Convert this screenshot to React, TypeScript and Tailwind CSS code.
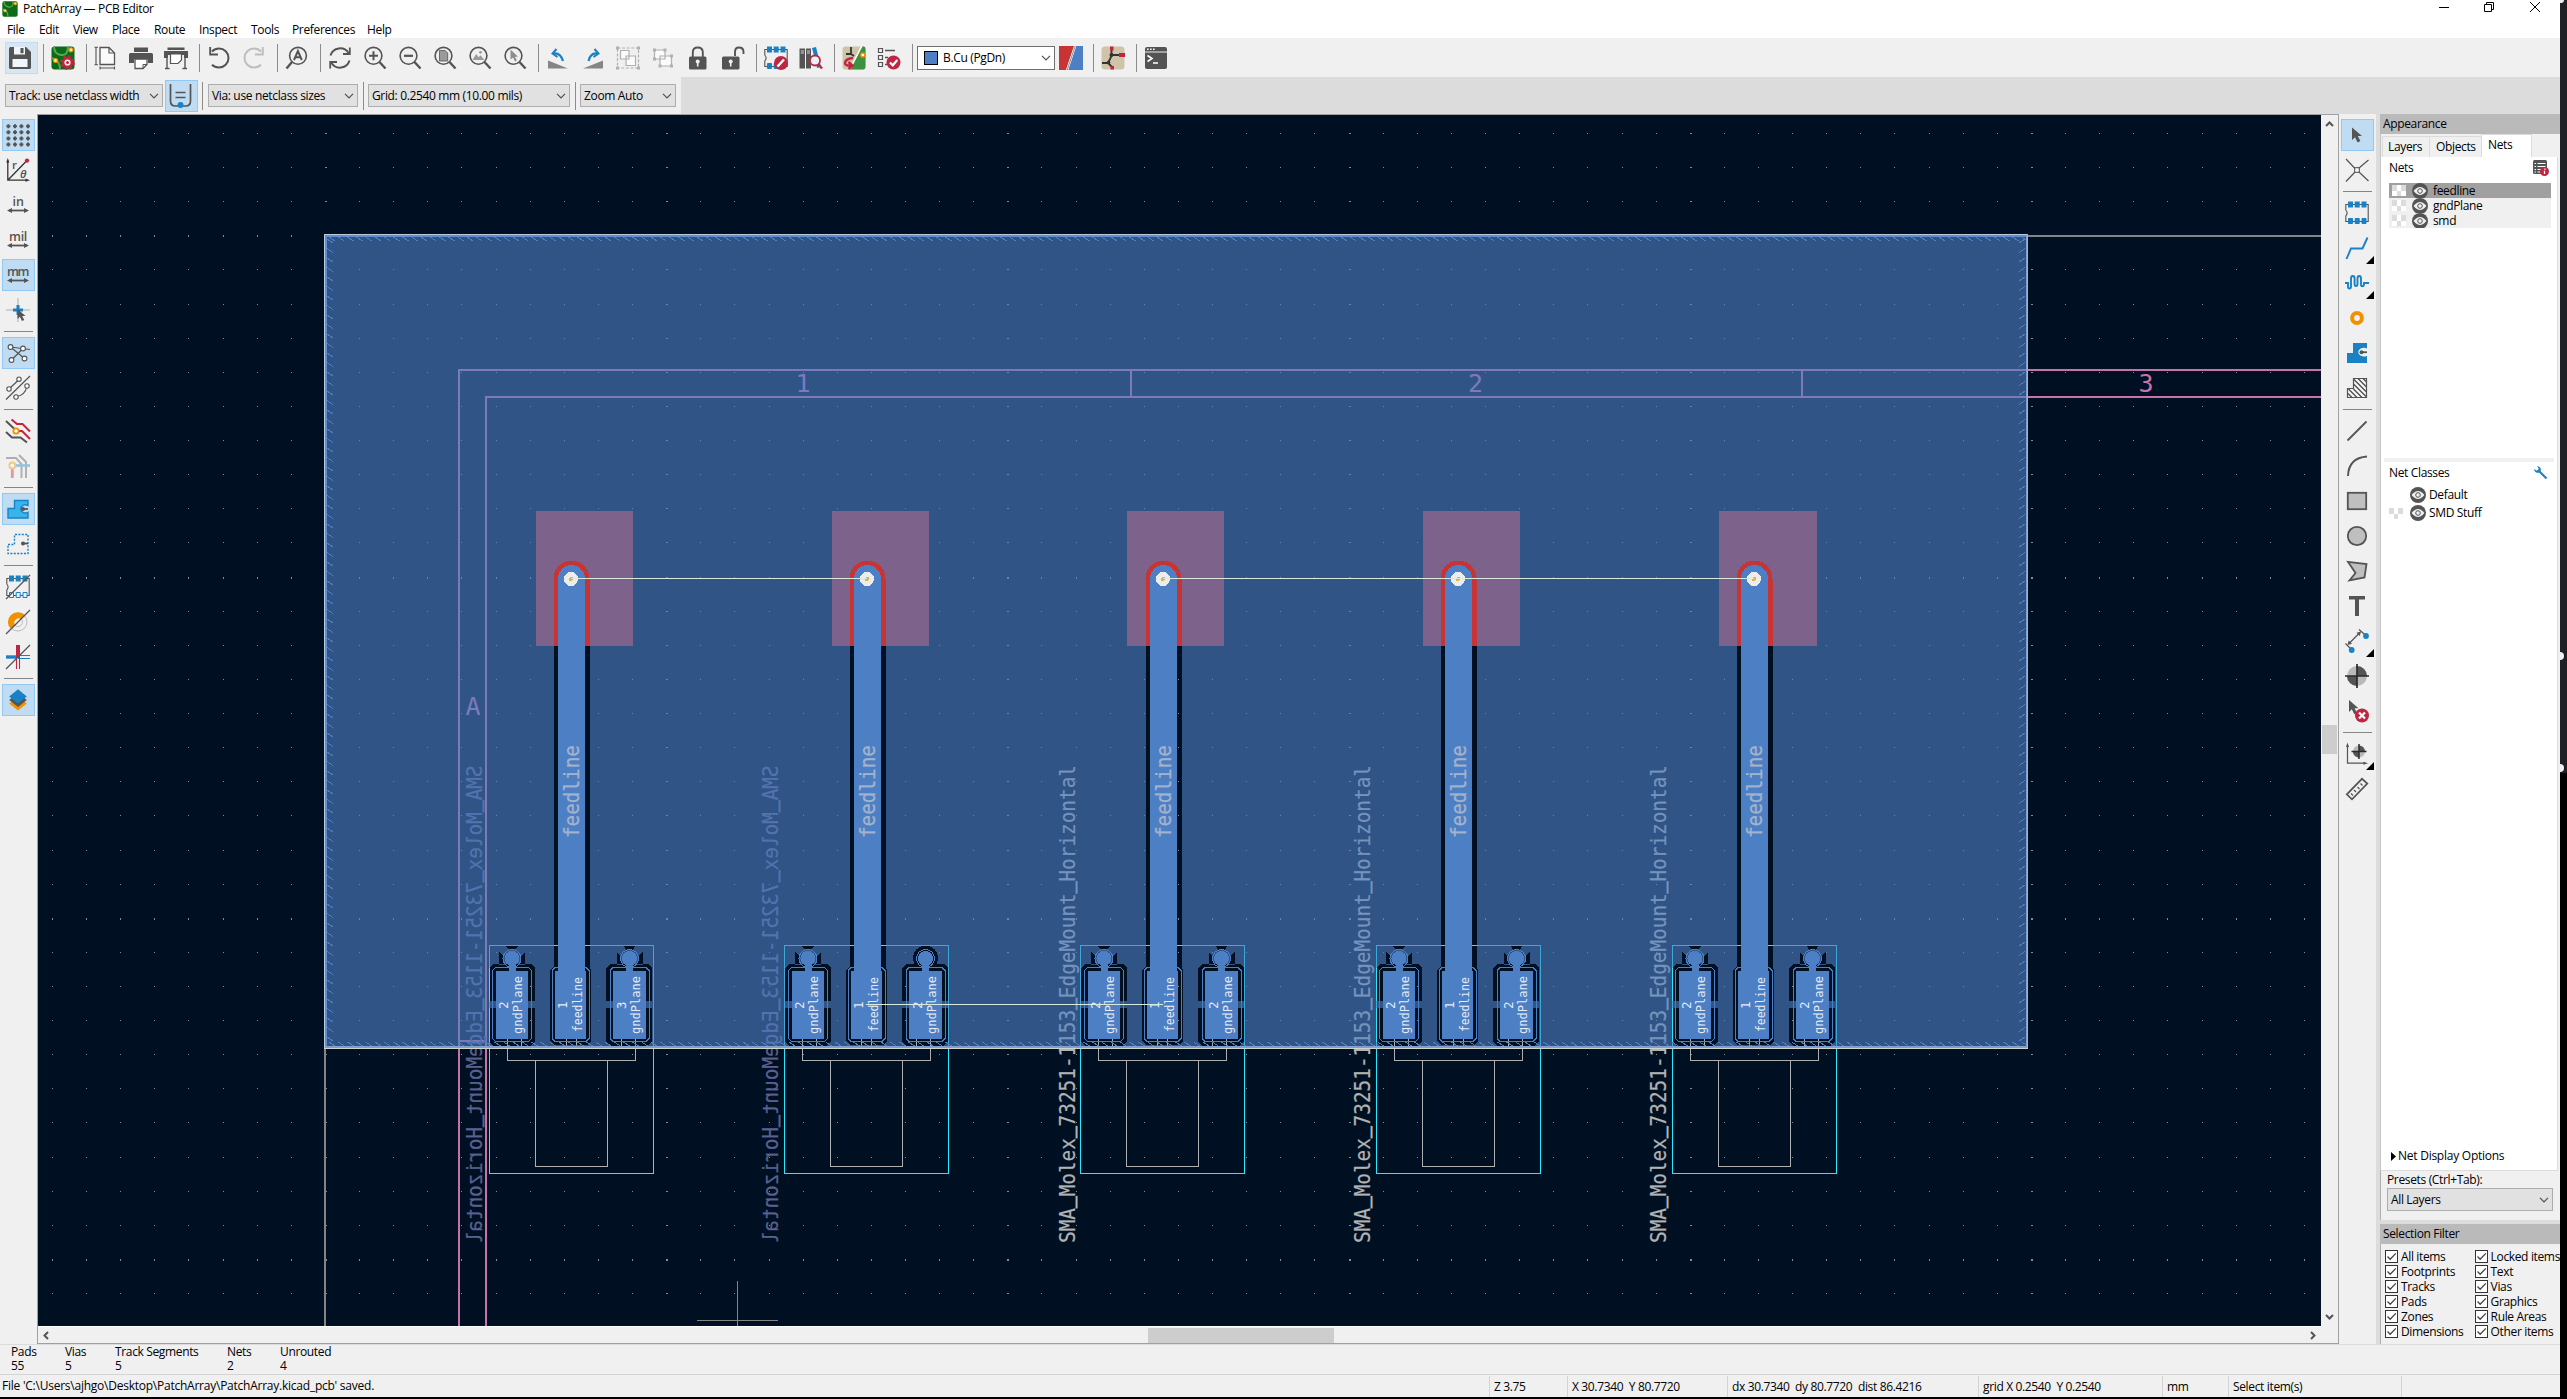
import React from "react";

const G = "#545454";
const B = "#1a81c4";
const R = "#bf2641";
const O = "#f29100";

function Ico({ children, s = 24 }: { children: React.ReactNode; s?: number }) {
  return (
    <svg width={s} height={s} viewBox="0 0 24 24" fill="none" stroke={G} strokeWidth="1.6" className="shrink-0 overflow-visible">
      {children}
    </svg>
  );
}

function Btn({ on, more, children }: { on?: boolean; more?: boolean; children: React.ReactNode }) {
  return (
    <div
      className={
        on
          ? "relative flex h-8 w-[33px] shrink-0 items-center border border-[#90c8f6] bg-[#c0dcf3] pl-[3px]"
          : "relative flex h-8 w-[33px] shrink-0 items-center pl-[4px]"
      }
    >
      {children}
      {more && (
        <svg width="8" height="8" className="absolute right-0 bottom-0">
          <path d="M8 0V8H0Z" fill="#000" />
        </svg>
      )}
    </div>
  );
}

const VSep = () => (
  <div className="flex h-8 w-[6px] shrink-0 justify-center">
    <div className="h-7 w-px self-center bg-[#8c8c8c]" />
  </div>
);
const HSep = () => (
  <div className="flex h-[5px] w-[33px] shrink-0 items-center justify-center">
    <div className="h-px w-[29px] bg-[#858585]" />
  </div>
);

const Chevron = () => (
  <svg width="10" height="6" viewBox="0 0 10 6" fill="none" stroke="#505050" strokeWidth="1.2" className="shrink-0">
    <path d="M1 .8L5 4.8L9 .8" />
  </svg>
);

function Combo({ label, className }: { label: string; className: string }) {
  return (
    <div className={"flex h-[23px] shrink-0 items-center justify-between border border-[#adadad] bg-[#e1e1e1] pr-[3px] pl-[3px] " + className}>
      <span>{label}</span>
      <Chevron />
    </div>
  );
}

/* ---------- icons ---------- */

const Lens = ({ children }: { children?: React.ReactNode }) => (
  <Ico>
    <circle cx="10.5" cy="9.8" r="8.4" />
    <path d="M16.5 16L22.5 22.5" strokeWidth="2.4" />
    {children}
  </Ico>
);
const Arrow2 = ({ y = 19 }: { y?: number }) => (
  <g fill={G} stroke="none">
    <path d={`M3 ${y - 0.9}H21V${y + 0.9}H3Z`} />
    <path d={`M1 ${y}L6 ${y - 2.6}V${y + 2.6}ZM23 ${y}L18 ${y - 2.6}V${y + 2.6}Z`} />
  </g>
);
const UnitIcon = ({ t, w }: { t: string; w: number }) => (
  <Ico>
    <text x="12" y="12.5" textAnchor="middle" textLength={w} fontFamily="Open Sans" fontSize="12.5" fontWeight="600" fill={G} stroke="none">
      {t}
    </text>
    <Arrow2 y={17.5} />
  </Ico>
);
const Footprint = ({ children, hollow }: { children?: React.ReactNode; hollow?: boolean }) => (
  <Ico>
    <path d="M.8 3.5H23.2V20.5H.8V15Q3.4 12 .8 9Z" strokeWidth="1.1" />
    <g fill={B} stroke="none">
      <path d="M3 .5h5v6h-5zM9.7 .5h5v6h-5zM16.5 .5h5v6h-5z" />
    </g>
    <g fill={hollow ? "#f0f0f0" : B} stroke={B} strokeWidth="1">
      <path d="M3.5 17.5h4v5h-4zM10.2 17.5h4v5h-4zM17 17.5h4v5h-4z" />
    </g>
    {children}
  </Ico>
);
const Lock = ({ open }: { open?: boolean }) => (
  <Ico>
    {open ? (
      <path d="M14 10V6Q14 1.5 18 1.5Q22.5 1.5 22.5 6V8" strokeWidth="1.9" />
    ) : (
      <path d="M6.8 11V6.5Q6.8 1.5 11.8 1.5Q16.8 1.5 16.8 6.5V11" strokeWidth="1.9" />
    )}
    <rect x={open ? 1 : 3} y="10.5" width="17.5" height="13" rx="1.5" fill={G} stroke="none" />
    <circle cx={open ? 9.7 : 11.7} cy="15.5" r="2" fill="#f0f0f0" stroke="none" />
    <path d={open ? "M9.7 16v4.5" : "M11.7 16v4.5"} stroke="#f0f0f0" strokeWidth="1.6" />
  </Ico>
);
const Board = () => (
  <g stroke="none">
    <rect x=".5" y=".5" width="23" height="23" rx="3" fill="#0b6b16" />
    <path d="M3 .5Q3 8 10 9Q17 10 17 .5M.5 12Q9 14 9 23.5" fill="none" stroke="#5aa552" strokeWidth="2" />
    <circle cx="4.5" cy="14.5" r="2" fill="#ffe9b0" stroke={O} strokeWidth="1.2" />
    <circle cx="20" cy="3.8" r="2" fill="#ffe9b0" stroke={O} strokeWidth="1.2" />
  </g>
);
const Cursor = ({ x = 0, y = 0, s = 1 }: { x?: number; y?: number; s?: number }) => (
  <path d="M0 0V12.5L3 9.8L5.6 15L8.4 13.6L5.8 8.6H10Z" transform={`translate(${x} ${y}) scale(${s})`} fill={G} stroke="none" />
);

const Schem = () => (
  <g>
    <rect x=".5" y=".5" width="23" height="23" rx="3.5" fill="#cfc3a8" stroke="none" />
    <path d="M10.5 3V10L7 17L1 17M10.5 9H20M7 17L11 21" stroke="#333" strokeWidth="1.8" />
    <circle cx="10.5" cy="9" r="2" fill="#333" stroke="none" />
    <circle cx="7.5" cy="16.5" r="1.8" fill="#333" stroke="none" />
  </g>
);

function TopToolbar() {
  return (
    <div className="flex h-[39px] w-[2560px] items-center gap-[2px] bg-[#f0f0f0] pl-[5px] [&>div>svg]:-ml-px">
      <div className="flex h-8 w-[33px] shrink-0 items-center border border-[#bfdcf3] bg-[#d8e6f1] pl-[3px]">
        <Ico>
          <path d="M1 2.5Q1 1 2.5 1H18L23 6V21.5Q23 23 21.5 23H2.5Q1 23 1 21.5Z" fill={G} stroke="none" />
          <path d="M6 1H17V8.5H6ZM4.5 13H19.5V21H4.5Z" fill="#f0f6fb" stroke="none" />
          <path d="M12.5 2H15.5V7.2H12.5Z" fill={G} stroke="none" />
        </Ico>
      </div>
      <VSep />
      <Btn>
        <Ico>
          <Board />
          <circle cx="16.5" cy="16.5" r="4.4" stroke={R} strokeWidth="2.6" fill="#f0f0f0" />
          <circle cx="16.5" cy="16.5" r="6.3" stroke={R} strokeWidth="2.2" strokeDasharray="2.4 2.55" />
          <circle cx="16.5" cy="16.5" r="1.5" fill={R} stroke="none" />
        </Ico>
      </Btn>
      <VSep />
      <Btn>
        <Ico>
          <path d="M6 1.5H15L20.5 7V18.5H6Z" strokeWidth="1.3" fill="#fafafa" />
          <path d="M15 1.5V7H20.5" strokeWidth="1.2" />
          <path d="M2 1V19M.5 1.2H4M.5 18.8H4M6 22H20.5M6 20.5V23.5M20.5 20.5V23.5" strokeWidth="1.1" />
        </Ico>
      </Btn>
      <Btn>
        <Ico>
          <path d="M5 1.5H19V6H5Z" fill={G} stroke="none" />
          <path d="M1.5 7H22.5Q24 7 24 8.5V17H19V13H5V17H0V8.5Q0 7 1.5 7Z" fill={G} stroke="none" />
          <path d="M6 13H18V18.5L14 22.5H6Z" fill="#fff" strokeWidth="1.3" />
          <path d="M18 18.5H14V22.5" strokeWidth="1" />
        </Ico>
      </Btn>
      <Btn>
        <Ico>
          <path d="M3.5 1.5H20.5V4H3.5ZM0 5H24V12H20V9H4V12H0Z" fill={G} stroke="none" />
          <path d="M6.5 8H17.5V14L14 17.5H6.5Z" fill="#fff" strokeWidth="1.2" />
          <path d="M3 11V22.5M21 11V22.5M1 22.5H5.5M18.5 22.5H23" strokeWidth="1.4" />
        </Ico>
      </Btn>
      <VSep />
      <Btn>
        <Ico>
          <path d="M5 5.5Q8 2.5 12 2.5A9.5 9.5 0 0 1 12 21.5Q7.5 21.5 5 18.8" strokeWidth="2" />
          <path d="M3.2 1V8.5H11" strokeWidth="1.9" />
        </Ico>
      </Btn>
      <Btn>
        <Ico>
          <g stroke="#bdbdbd">
            <path d="M19 5.5Q16 2.5 12 2.5A9.5 9.5 0 0 0 12 21.5Q16.5 21.5 19 18.8" strokeWidth="2" />
            <path d="M20.8 1V8.5H13" strokeWidth="1.9" />
          </g>
        </Ico>
      </Btn>
      <VSep />
      <Btn>
        <Ico>
          <circle cx="13" cy="9.8" r="8.4" />
          <path d="M7 16L1.5 22.5" strokeWidth="2.4" />
          <path d="M9 14L12.9 5L16.8 14M10.4 11.2H15.4" strokeWidth="2" />
        </Ico>
      </Btn>
      <VSep />
      <Btn>
        <Ico>
          <path d="M2.5 9.5A10 10 0 0 1 20.5 7M21.5 14.5A10 10 0 0 1 3.5 17" strokeWidth="2" />
          <path d="M21.8 1.5V8H15M2.2 22.5V16H9" strokeWidth="1.8" />
        </Ico>
      </Btn>
      <Btn>
        <Lens>
          <path d="M6 9.8H15M10.5 5.3V14.3" strokeWidth="2" />
        </Lens>
      </Btn>
      <Btn>
        <Lens>
          <path d="M6 9.8H15" strokeWidth="2.2" />
        </Lens>
      </Btn>
      <Btn>
        <Lens>
          <path d="M6.5 4.5H12.2L14.7 7V15H6.5Z" fill="#9a9a9a" strokeWidth=".8" />
        </Lens>
      </Btn>
      <Btn>
        <Lens>
          <path d="M4.5 14L8.2 8L10.6 11.2L12.6 9.2L16.4 14Z" fill="#9a9a9a" stroke="none" />
          <circle cx="12.5" cy="6.3" r="1.4" fill="#9a9a9a" stroke="none" />
        </Lens>
      </Btn>
      <Btn>
        <Lens>
          <path d="M7.5 3.5V13.5L10 11.5L12 15.5L13.8 14.5L12 10.8H15Z" fill="#8d8d8d" stroke="none" />
        </Lens>
      </Btn>
      <VSep />
      <Btn>
        <Ico>
          <path d="M2 14.5V22.5H22Z" fill="#858585" stroke="none" />
          <path d="M7 7.5Q14.5 6 17 15" stroke={B} strokeWidth="2.2" />
          <path d="M10.5 3L6.5 7.6L11.5 11" stroke={B} strokeWidth="2" />
        </Ico>
      </Btn>
      <Btn>
        <Ico>
          <path d="M22 14.5V22.5H2Z" fill="#858585" stroke="none" />
          <path d="M17 7.5Q9.5 6 7.5 15" stroke={B} strokeWidth="2.2" />
          <path d="M13.5 3L17.5 7.6L12.5 11" stroke={B} strokeWidth="2" />
        </Ico>
      </Btn>
      <Btn>
        <Ico>
          <rect x="1.5" y="2" width="21" height="20" stroke="#b0b0b0" strokeWidth="1.2" strokeDasharray="3 1.6" />
          <path d="M4.5 4.5H13V13H4.5ZM10 10H19.5V19.5H10Z" fill="#fbfbfb" stroke="#b0b0b0" strokeWidth="1.2" />
          <path d="M0 .5h3v3H0zM21 .5h3v3h-3zM0 20.5h3v3H0zM21 20.5h3v3h-3z" fill="#b0b0b0" stroke="none" />
        </Ico>
      </Btn>
      <Btn>
        <Ico>
          <path d="M3.5 4H14V13H3.5ZM9 10H20.5V20H9Z" fill="#fbfbfb" stroke="#b0b0b0" strokeWidth="1.2" />
          <path d="M2 2.5h3v3H2zM12.5 2.5h3v3h-3zM2 11.5h3v3H2zM19 8.5h3v3h-3zM7.5 18.5h3v3h-3zM19 18.5h3v3h-3z" fill="#b0b0b0" stroke="none" />
        </Ico>
      </Btn>
      <Btn>
        <Lock />
      </Btn>
      <Btn>
        <Lock open />
      </Btn>
      <VSep />
      <Btn>
        <Footprint>
          <circle cx="17" cy="17" r="7" fill={R} stroke="none" />
          <path d="M13.5 20.5L20 13.5" stroke="#fff" strokeWidth="2.4" />
        </Footprint>
      </Btn>
      <Btn>
        <Ico>
          <path d="M.5 2.5H6V22.5H.5ZM7 2.5H12V22.5H7Z" fill={G} stroke="none" />
          <path d="M13 2L17 1L22 21L18 22Z" fill={B} stroke="none" />
          <path d="M1.8 5H5M1.8 7H5M8 5H11M8 7H11" stroke="#f0f0f0" strokeWidth=".8" />
          <circle cx="16" cy="14.5" r="5" fill="#e8f2fb" stroke={R} strokeWidth="1.8" />
          <path d="M19.5 18.5L23 22.5" stroke={R} strokeWidth="2.4" />
        </Ico>
      </Btn>
      <VSep />
      <Btn>
        <Ico>
          <rect x=".5" y=".5" width="23" height="23" rx="3" fill="#cfc3a8" stroke="none" />
          <path d="M20 .5H22Q23.5 .5 23.5 3V20Q23.5 23.5 21 23.5H8Z" fill="#3d9140" stroke="none" />
          <path d="M19.8 0L8 23" stroke="#fff" strokeWidth="1.6" />
          <path d="M9 1V8L4 8M9 8L12 10" stroke="#333" strokeWidth="1.8" />
          <circle cx="20.8" cy="9" r="2" fill="#fff" stroke={O} strokeWidth="1.4" />
          <path d="M11 12Q3 13 3 17Q3 20 9 19.5M6.5 16L10.5 19.5L6.5 23" stroke={R} strokeWidth="2.4" />
        </Ico>
      </Btn>
      <Btn>
        <Ico>
          <path d="M1.5 2.5h4v4h-4zM1.5 9.5h4v4h-4zM1.5 16.5h4v4h-4z" strokeWidth="1.2" />
          <path d="M8 4.5H18M8 11.5H11M8 18.5H10" strokeWidth="1.3" />
          <circle cx="16.5" cy="16.5" r="7" fill={R} stroke="none" />
          <path d="M13 16.5L15.8 19.3L20.3 14" stroke="#fff" strokeWidth="2.2" />
        </Ico>
      </Btn>
      <VSep />
      <div className="flex h-6 w-[138px] shrink-0 items-center border border-[#707070] bg-white pr-[3px] pl-[6px]">
        <div className="size-[14px] border border-black bg-[#4d7fc4]" />
        <span className="ml-[5px] flex-1">B.Cu (PgDn)</span>
        <Chevron />
      </div>
      <div className="flex w-[31px] shrink-0 items-center pl-[3px]">
        <Ico>
          <path d="M0 0H15L7 24H0Z" fill="#c83434" stroke="none" />
          <path d="M17 0H24V24H9Z" fill="#4d7fc4" stroke="none" />
          <path d="M16.2 0L8.2 24" stroke="#fff" strokeWidth="2" />
          <path d="M16.2 0L8.2 24" stroke="#555" strokeWidth=".7" />
        </Ico>
      </div>
      <VSep />
      <Btn>
        <Ico>
          <Schem />
          <path d="M9 .5h3.5v4H9zM18 7h6v4h-6zM9.5 20h3.5v3.5H9.5z" fill={R} stroke="none" />
        </Ico>
      </Btn>
      <VSep />
      <Btn>
        <Ico>
          <rect x="1" y="1" width="22" height="22" rx="2" fill={G} stroke="none" />
          <path d="M1 6H23" stroke="#f0f0f0" strokeWidth="1" />
          <path d="M3 3.3h1.6M6 3.3h1.6M9 3.3h1.6" stroke="#fff" strokeWidth="1.4" />
          <path d="M3.5 9.5L8 12.5L3.5 15.5M9 17H14" stroke="#fff" strokeWidth="1.6" />
        </Ico>
      </Btn>
    </div>
  );
}

const ZoneShape = "M2 11.5H8.5V3.5H22V8.5Q18.5 6.8 15.8 9.2Q13.6 11.8 15.8 14.6Q18.5 17 22 15.3V21H2Z";

function LeftToolbar() {
  return (
    <div className="flex w-[37px] shrink-0 flex-col gap-[3px] bg-[#f0f0f0] pt-[5px] pl-[2px]">
      <Btn on>
        <Ico>
          <path
            d="M.4 3.2h4M2.4 1.2v4M7 3.2h4M9 1.2v4M13.4 3.2h4M15.4 1.2v4M20 3.2h4M22 1.2v4M.4 9.2h4M2.4 7.2v4M7 9.2h4M9 7.2v4M13.4 9.2h4M15.4 7.2v4M20 9.2h4M22 7.2v4M.4 15.4h4M2.4 13.4v4M7 15.4h4M9 13.4v4M13.4 15.4h4M15.4 13.4v4M20 15.4h4M22 13.4v4M.4 21.6h4M2.4 19.6v4M7 21.6h4M9 19.6v4M13.4 21.6h4M15.4 19.6v4M20 21.6h4M22 19.6v4"
            strokeWidth="2"
          />
        </Ico>
      </Btn>
      <Btn>
        <Ico>
          <path d="M1.8 3V22.2H21M2 22L20.5 3" strokeWidth="1.3" stroke="#333" />
          <path d="M1.8 0L3.4 4.5H.2ZM24 22.2L19.5 20.6V23.8Z" fill="#333" stroke="none" />
          <circle cx="21" cy="2.6" r="2.2" fill={R} stroke="none" />
          <text x="6" y="10.5" fontFamily="Open Sans" fontSize="11.5" fontWeight="600" fill={G} stroke="none">r</text>
          <text x="14" y="19.5" fontFamily="Open Sans" fontStyle="italic" fontSize="11.5" fontWeight="600" fill={G} stroke="none">θ</text>
        </Ico>
      </Btn>
      <Btn><UnitIcon t="in" w={11} /></Btn>
      <Btn><UnitIcon t="mil" w={18} /></Btn>
      <Btn on><UnitIcon t="mm" w={22} /></Btn>
      <Btn>
        <Ico>
          <path d="M0 12H24M12 0V24" stroke="#adadad" strokeWidth="1" />
          <path d="M7 12H17M12 7V17" stroke={B} strokeWidth="3" />
          <Cursor x={11.5} y={11} s={0.8} />
        </Ico>
      </Btn>
      <HSep />
      <Btn on>
        <Ico>
          <path d="M4.5 6L24 8.5M4.5 6L18.5 17.5M17 7.5L5.5 19" strokeWidth="1.2" />
          <g fill="#fff" strokeWidth="1.1">
            <circle cx="4.5" cy="6" r="2.4" /><circle cx="17" cy="7.5" r="2.4" />
            <circle cx="5.5" cy="19" r="2.4" /><circle cx="18.5" cy="17.5" r="2.4" />
          </g>
        </Ico>
      </Btn>
      <Btn>
        <Ico>
          <path d="M0 23.5L24 0M3 13L13 3.5M10 20.5Q19 20 21 10" strokeWidth="1.2" />
          <g fill="#fff" strokeWidth="1.1">
            <circle cx="3" cy="13" r="2.2" /><circle cx="13" cy="3.2" r="2.2" />
            <circle cx="10" cy="21" r="2.2" /><circle cx="21" cy="10" r="2.2" />
          </g>
        </Ico>
      </Btn>
      <HSep />
      <Btn>
        <Ico>
          <path d="M0 2L9 10.5M0 13L6 18.5H14.5L21 23.5" strokeWidth="2" />
          <path d="M5.5 .5L11 5H16.5L24 12.5M11 12H16L24 20" stroke={R} strokeWidth="2" />
          <circle cx="10" cy="12" r="2.6" stroke={O} fill="#fff" strokeWidth="1.8" />
        </Ico>
      </Btn>
      <Btn>
        <Ico>
          <g opacity=".42">
            <path d="M0 4H10L15.5 10V24M13 1L20 8V24" strokeWidth="1.9" />
            <path d="M8 11.5H24" stroke={B} strokeWidth="2.6" />
            <path d="M6.3 13V24" stroke={R} strokeWidth="2.8" />
            <circle cx="6.3" cy="11.5" r="3" stroke={O} fill="#fff" strokeWidth="1.8" />
          </g>
        </Ico>
      </Btn>
      <HSep />
      <Btn on>
        <Ico>
          <path d={ZoneShape} fill="#39b4ea" stroke={B} strokeWidth="1.4" />
          <path d="M17 12H22" strokeWidth="1.8" />
          <circle cx="17" cy="12" r="2" fill={G} stroke="none" />
        </Ico>
      </Btn>
      <Btn>
        <Ico>
          <path d="M2 12.5H8.5V2.5H22V21.5H2Z" stroke={B} strokeWidth="1.4" strokeDasharray="2 1.4" />
          <path d="M17 11.5H22" strokeWidth="1.8" />
          <circle cx="17" cy="11.5" r="2" fill={G} stroke="none" />
        </Ico>
      </Btn>
      <HSep />
      <Btn>
        <Footprint hollow>
          <path d="M0 24L24 0" strokeWidth="1.3" />
        </Footprint>
      </Btn>
      <Btn>
        <Ico>
          <circle cx="12" cy="12" r="9" stroke="#bdbdbd" strokeWidth="1" />
          <circle cx="12" cy="12" r="4.5" stroke="#bdbdbd" strokeWidth="1" />
          <path d="M5 19A10 9.6 0 1 1 19 5L15 9A4.5 4.5 0 0 0 9 15.3Z" fill={O} stroke="none" />
          <path d="M0 24L24 0" strokeWidth="1.2" />
        </Ico>
      </Btn>
      <Btn>
        <Ico>
          <path d="M0 12H11" stroke={B} strokeWidth="3.4" />
          <path d="M12 10.5H24M12 13.5H24" stroke={B} strokeWidth="1.1" />
          <path d="M12 0V13" stroke={R} strokeWidth="4" />
          <path d="M10.5 13V24M13.5 13V24" stroke={R} strokeWidth="1.1" />
          <path d="M0 24L24 0" strokeWidth="1.2" />
        </Ico>
      </Btn>
      <HSep />
      <Btn on>
        <Ico>
          <path d="M3.2 15.5L12 22.5L20.8 15.5L12 9Z" fill={O} stroke="none" />
          <path d="M3.2 12L12 19L20.8 12L12 5Z" fill={G} stroke="none" />
          <path d="M3.2 8.5L12 15.5L20.8 8.5L12 1.2Z" fill={B} stroke="none" />
        </Ico>
      </Btn>
    </div>
  );
}

function RightToolbar() {
  return (
    <div className="flex w-[37px] shrink-0 flex-col gap-[3px] bg-[#f0f0f0] pt-[5px] pl-[2px]">
      <Btn on><Ico><Cursor x={7} y={4.5} /></Ico></Btn>
      <Btn>
        <Ico>
          <path d="M1 1L10 10.5M14 14L23.5 23M23.5 2L14 10M10 14L1 23.5" strokeWidth="1.2" />
          <rect x="9.7" y="9.7" width="4.6" height="4.6" strokeWidth="1.1" fill="#fff" />
        </Ico>
      </Btn>
      <HSep />
      <Btn><Footprint /></Btn>
      <Btn more><Ico><path d="M1.5 23L6 12.5H17.5L22.5 1.5" stroke={B} strokeWidth="1.9" /></Ico></Btn>
      <Btn more>
        <Ico>
          <path d="M0 12H3V15.5Q3 17.5 4.5 17.5Q6 17.5 6 15.5V7.5Q6 5 7.8 5Q9.6 5 9.6 7.5V13Q9.6 15 11 15Q12.5 15 12.5 13V7.5Q12.5 5 14.2 5Q16 5 16 7.5V13Q16 15.3 17.3 15.3Q19 15.3 19 13V12H24" stroke={B} strokeWidth="1.9" />
        </Ico>
      </Btn>
      <Btn><Ico><circle cx="12" cy="12" r="4.9" stroke={O} strokeWidth="4" /></Ico></Btn>
      <Btn>
        <Ico>
          <path d="M2 12H8V2H22V7.5Q18.5 6 15 8Q11.5 11 15 14.3Q18.5 16.5 22 15V22H2Z" fill={B} stroke="none" />
          <path d="M16 11.2H22" strokeWidth="1.8" />
          <circle cx="16.5" cy="11.2" r="2" fill={G} stroke="none" />
        </Ico>
      </Btn>
      <Btn>
        <Ico>
          <path d="M2.5 21.5V12.5H8.5V2.5H21.5V21.5Z" strokeWidth="1.2" fill="#fafafa" />
          <path d="M3 17.5L7 21.5M3.5 13L12 21.5M8.5 13L17 21.5M8.5 8L21.5 21M8.5 3L21.5 16M13 2.5L21.5 11M18 2.5L21.5 6" strokeWidth="1.5" />
        </Ico>
      </Btn>
      <HSep />
      <Btn><Ico><path d="M2.5 21.5L21.5 2.5" strokeWidth="1.8" /></Ico></Btn>
      <Btn><Ico><path d="M3 22Q3.5 4 22 2.5" strokeWidth="1.9" /></Ico></Btn>
      <Btn><Ico><rect x="2.8" y="3.8" width="18.4" height="16.4" fill="#bfbfbf" strokeWidth="1.8" /></Ico></Btn>
      <Btn><Ico><circle cx="12" cy="12" r="9.2" fill="#bfbfbf" strokeWidth="1.8" /></Ico></Btn>
      <Btn><Ico><path d="M3 2.8L21.5 5L19.5 18.5L4.5 21.5L10.5 14Z" fill="#bfbfbf" strokeWidth="1.8" /></Ico></Btn>
      <Btn><Ico><path d="M4 2H20V5.5H14V22H10V5.5H4Z" fill={G} stroke="none" /></Ico></Btn>
      <Btn more>
        <Ico>
          <path d="M4 14.5L14.5 4M14 .5L21.5 7M.5 14.5L7 21" strokeWidth="1.2" />
          <path d="M2.5 16L3.7 11.5L7 14.8ZM16 2.5L11.5 3.7L14.8 7Z" fill={G} stroke="none" />
          <circle cx="21" cy="7" r="2.9" fill={B} stroke="none" />
          <circle cx="6.7" cy="21" r="2.9" fill={B} stroke="none" />
        </Ico>
      </Btn>
      <Btn>
        <Ico>
          <circle cx="12" cy="12" r="10" fill="#b9b9b9" stroke="none" />
          <path d="M12 12V2A10 10 0 0 1 22 12ZM12 12V22A10 10 0 0 1 2 12Z" fill={G} stroke="none" />
          <path d="M0 12H24M12 0V24" stroke="#2b2b2b" strokeWidth="1.7" />
        </Ico>
      </Btn>
      <Btn>
        <Ico>
          <Cursor x={4} y={1} s={0.95} />
          <circle cx="17" cy="16.5" r="7" fill={R} stroke="none" />
          <path d="M14 13.5L20 19.5M20 13.5L14 19.5" stroke="#fff" strokeWidth="2.2" />
        </Ico>
      </Btn>
      <HSep />
      <Btn more>
        <Ico>
          <path d="M2.5 3V21.2H20" strokeWidth="1.2" />
          <path d="M2.5 .5L4 5H1ZM23 21.2L18.5 19.7V22.7Z" fill={G} stroke="none" />
          <circle cx="14" cy="9.5" r="6" fill="#b9b9b9" stroke="none" />
          <path d="M14 9.5V3.5A6 6 0 0 1 20 9.5ZM14 9.5V15.5A6 6 0 0 1 8 9.5Z" fill={G} stroke="none" />
          <path d="M6.5 9.5H21.5M14 2V17" stroke="#2b2b2b" strokeWidth="1.5" />
        </Ico>
      </Btn>
      <Btn>
        <Ico>
          <path d="M1.8 17.3L17 1.8L22.3 6.6L7 22.3Z" strokeWidth="1.7" />
          <path d="M6 16.5L8 18.5M9 13L11 15M12.5 10L14.5 12M15.5 6.5L17.5 8.5" strokeWidth="1.2" />
        </Ico>
      </Btn>
    </div>
  );
}

/* ---------- board canvas ---------- */

const BG = "#001023";
const CU = "#4d7fc4";
const MONO = "DejaVu Sans Mono";
const CENTERS = [571.5, 867.5, 1163.5, 1458.5, 1754.5];
const ZL = 325, ZT = 235, ZR = 2027, ZB = 1047;

const rr = (x: number, y: number, w: number, h: number, r: number) =>
  `M${x + r} ${y}h${w - 2 * r}l${r} ${r}v${h - 2 * r}l${-r} ${r}h${-(w - 2 * r)}l${-r} ${-r}v${-(h - 2 * r)}z`;

function gridPath() {
  let d = "";
  for (let j = 0; j < 36; j++)
    for (let i = 0; i < 67; i++) {
      const x = Math.round(52 + i * 34.12);
      const y = Math.round(133 + j * 34.12);
      const w = i % 10 === 8 ? 2 : 1;
      const h = j % 10 === 3 ? 2 : 1;
      d += `M${x} ${y}h${w}v${h}h${-w}z`;
    }
  return d;
}

const viaBits = (x: number) =>
  `M${x - 6} 946h12l-3 4h-6zM${x - 13} 952l4 4v5l2 4h-6zM${x + 13} 952l-4 4v5l-2 4h6z`;

function zonePath() {
  let d = `M${ZL} ${ZT}H${ZR}V${ZB}H${ZL}Z`;
  CENTERS.forEach((c, i) => {
    d += `M${c - 18} 967V578.5A18 18 0 0 1 ${c + 18} 578.5V967L${c + 19.5} 970V1041L${c + 16} 1044.5H${c - 18}L${c - 21.5} 1041V970Z`;
    for (const x of [c - 82.5, c + 34.5]) {
      d += `M${x} 1001V968L${x + 4} 964H${x + 42}L${x + 46} 968V1001Z`;
      d += `M${x} 1008V1041L${x + 4} 1045.5H${x + 42}L${x + 46} 1041V1008Z`;
    }
    d += viaBits(c - 59.5);
    d += i === 1
      ? `M${c + 47} 964A12.5 12.5 0 1 1 ${c + 69} 964Z`
      : viaBits(c + 58);
  });
  return d;
}

function hatchPath() {
  let d = "";
  for (let y = ZT + 4; y < ZB - 4; y += 9.5) d += `M${ZL + 2} ${y}l6 4M${ZR - 2} ${y}l-6 4`;
  for (let x = ZL + 4; x < ZR - 4; x += 9.2) d += `M${x} ${ZT + 2}l6 4M${x} ${ZB - 5}l6 4`;
  return d;
}

function VText({ x, y, len, size, fill, children, bold = 0 }: { x: number; y: number; len?: number; size: number; fill: string; children: string; bold?: number }) {
  return (
    <text
      transform={`translate(${x} ${y}) rotate(-90)`}
      fontSize={size} fill={fill} stroke={fill} strokeWidth={bold}
      textLength={len} lengthAdjust="spacingAndGlyphs" fontFamily={MONO}
    >
      {children}
    </text>
  );
}

/* Footprint value text; the back side is mirrored and runs downwards. */
function ValueText({ x, y, color, back }: { x: number; y: number; color: string; back?: boolean }) {
  const parts = ["SMA", "Molex", "73251-1153", "EdgeMount", "Horizontal"];
  return (
    <text
      transform={back ? `matrix(0 1 1 0 ${x} ${y})` : `translate(${x} ${y}) rotate(-90)`}
      fontSize="21" fill={color} stroke={color} strokeWidth=".2"
      textLength="478" lengthAdjust="spacingAndGlyphs" fontFamily={MONO}
    >
      {parts.map((p, i) => (
        <React.Fragment key={p}>
          {i > 0 && <tspan dy="-3" strokeWidth="1">_</tspan>}
          <tspan dy={i > 0 ? 3 : 0}>{p}</tspan>
        </React.Fragment>
      ))}
    </text>
  );
}

const PIN_RIGHT = ["3", "2", "2", "2", "2"];
const BODY_SHIFT = [0.5, 0, 0, 1, 1];

function Canvas() {
  return (
    <svg width="2283" height="1211" viewBox="38 115 2283 1211" className="block shrink-0 tracking-normal" shapeRendering="crispEdges">
      <rect x="38" y="115" width="2283" height="1211" fill={BG} />
      <path d={gridPath()} fill="#8a8d90" />
      <path d="M325 1326V236H2321" fill="none" stroke="#848484" strokeWidth="2" />
      <g stroke="#c872ab" strokeWidth="2" fill="none">
        <path d="M459 1326V370H2321M486 1326V397H2321M1131 370V397M1802 370V397M459 1041H486" />
      </g>
      <g fill="#c872ab" fontSize="25" fontFamily={MONO} textAnchor="middle">
        <text x="803" y="392">1</text>
        <text x="1475.5" y="392">2</text>
        <text x="2146" y="392">3</text>
        <text x="473" y="715">A</text>
      </g>

      {CENTERS.map((c, i) => {
        const f = c + BODY_SHIFT[i];
        return (
          <g key={c}>
            <rect x={i === 2 ? c - 36.5 : c - 35.5} y="511" width={i === 4 ? 98 : 97} height="135" fill="#c83434" />
            {i < 2 ? (
              <ValueText back x={c - 89.5} y={765.5} color="#5b6090" />
            ) : (
              <ValueText x={c - 89} y={1243} color="#b2b2b2" />
            )}
            <g fill="none" strokeWidth="1">
              <rect x={f - 83} y="945.5" width="164" height="228" stroke="#26e9ff" />
              <path d={`M${f - 65} 1039V1060.5H${f + 63}V1039M${f - 51} 1039V1046M${f + 49} 1039V1046M${f - 6} 1039V1046M${f + 4} 1039V1046`} stroke="#b0b0b0" />
              <path d={`M${f - 37} 1060.5V1166.5H${f + 35}V1060.5`} stroke="#b0b0b0" />
            </g>
          </g>
        );
      })}

      <path d={zonePath()} fill={CU} fillOpacity=".61" fillRule="evenodd" />
      <path d={hatchPath()} stroke={CU} strokeWidth="1" fill="none" />
      <path d={`M326 1046V236H${ZR}`} fill="none" stroke="#5f8fd0" strokeWidth="2" />
      <path d={`M325 1046.5H${ZR}V235`} fill="none" stroke="#7f9fcd" strokeWidth="2" />
      <path d={`M324.5 1048V234.5H${ZR + 1}`} fill="none" stroke="#b9c8dc" strokeWidth="1" />
      <path d={`M${ZR + 0.5} 234V1048`} fill="none" stroke="#9fb4d4" strokeWidth="1" />
      <path d={`M324 1048.5H${ZR + 1}`} stroke="#d0d2cd" strokeWidth="1" />

      {CENTERS.map((c, i) => (
        <g key={c}>
          <path d={`M${c - 13.5} 990V578.5A13.5 13.5 0 0 1 ${c + 13.5} 578.5V990Z`} fill={CU} />
          <g fill="none" stroke={CU} strokeWidth="1">
            <path d={rr(c - 79, 967.5, 39, 74, 3)} />
            <path d={rr(c - 19.5, 967.5, 37, 74, 3)} />
            <path d={rr(c + 38.5, 967.5, 39, 74, 3)} />
            <circle cx={c - 59.5} cy="958.5" r="9" />
            <circle cx={c + 58} cy="958.5" r="9" />
          </g>
          <g fill={CU}>
            <rect x={c - 75.5} y="971" width="32" height="68" />
            <rect x={c - 16.5} y="971" width="31" height="68" />
            <rect x={c + 41.5} y="971" width="33" height="68" />
            <circle cx={c - 59.5} cy="958.5" r="7.5" />
            <circle cx={c + 58} cy="958.5" r="7.5" />
            <rect x={c - 62.5} y="962" width="7" height="10" />
            <rect x={c + 54.5} y="962" width="7" height="10" />
          </g>
          <VText x={c + 7} y={838} len={93} size={21} fill="#a3b3cb" bold={0.3}>feedline</VText>
          <g>
            <VText x={c - 63.5} y={1009} size={12.5} fill="#e6ebf4">2</VText>
            <VText x={c - 49.5} y={1034} len={58} size={12.5} fill="#e6ebf4">gndPlane</VText>
            <VText x={c - 4.5} y={1009} size={12.5} fill="#e6ebf4">1</VText>
            <VText x={c + 10} y={1032} len={55} size={12.5} fill="#e6ebf4">feedline</VText>
            <VText x={c + 54} y={1009} size={12.5} fill="#e6ebf4">{PIN_RIGHT[i]}</VText>
            <VText x={c + 68} y={1034} len={58} size={12.5} fill="#e6ebf4">gndPlane</VText>
          </g>
          <circle cx={c - 0.5} cy="579" r="7" fill="#ececec" />
          <circle cx={c - 0.5} cy="579" r="2" fill="#e0b43a" />
        </g>
      ))}
      <g stroke="#d8ebda" strokeWidth="1">
        <path d="M571 578.5H867M1163 578.5H1754M866 1004.5H1163" />
      </g>
      <path d="M697 1320.5H778M737.5 1281V1326" stroke="#848484" strokeWidth="1" />
    </svg>
  );
}

/* ---------- right dock ---------- */

const Eye = () => (
  <svg width="16" height="16" viewBox="0 0 16 16" className="shrink-0">
    <circle cx="8" cy="8" r="8" fill={G} />
    <path d="M1.6 8Q8 .2 14.4 8Q8 15.8 1.6 8Z" fill="#f0f0f0" />
    <circle cx="8" cy="8" r="2.3" fill="none" stroke={G} strokeWidth="1" />
  </svg>
);
const Swatch = ({ plain }: { plain?: boolean }) => (
  <svg width="14" height="11" viewBox="0 0 14 11" className="shrink-0" shapeRendering="crispEdges">
    {!plain && <rect width="14" height="11" fill="#fff" />}
    <path d="M0 0h5v5.5H0zM9 0h5v5.5H9zM5 5.5h4v5.5H5z" fill="#dcdcdc" />
  </svg>
);
const Check = ({ label }: { label: string }) => (
  <div className="flex h-[15px] items-center whitespace-nowrap">
    <div className="flex size-[13px] shrink-0 items-center justify-center border border-[#333] bg-white">
      <svg width="11" height="11" viewBox="0 0 11 11" fill="none" stroke="#444" strokeWidth="1.3">
        <path d="M1.5 5.5L4.2 8.2L9.8 2.4" />
      </svg>
    </div>
    <span className="ml-[3px]">{label}</span>
  </div>
);

function Dock() {
  return (
    <div className="flex w-[184px] shrink-0 flex-col bg-[#dcdcdc] pl-1">
      <div className="h-5 shrink-0 bg-[#bababa] pl-[3px] leading-5">Appearance</div>
      <div className="flex h-[1037px] shrink-0 flex-col border-l border-[#c4c4c4] bg-[#f0f0f0] pr-[2px]">
        <div className="flex h-[23px] shrink-0 items-end pl-px">
          <div className="h-[21px] w-12 border border-b-0 border-[#dcdcdc] pl-[5px] leading-[20px]">Layers</div>
          <div className="h-[21px] w-[51px] border-t border-[#dcdcdc] pl-[6px] leading-[20px]">Objects</div>
          <div className="h-[23px] w-[51px] border border-b-0 border-[#dcdcdc] bg-white pl-[6px] leading-[19px]">Nets</div>
        </div>
        <div className="flex flex-1 flex-col border-r border-b border-[#dcdcdc] bg-white">
          <div className="flex h-[26px] shrink-0 items-center justify-between pt-[2px] pr-[8px] pl-[8px]">
            <span className="-mt-[6px]">Nets</span>
            <svg width="16" height="16" viewBox="0 0 16 16" className="-mt-[6px]">
              <rect x="0" y="0" width="14" height="14" rx="1.5" fill={G} />
              <path d="M1.5 3.5H3M4.5 3.5H12.5M1.5 6.5H3M4.5 6.5H12.5M1.5 9.5H3M4.5 9.5H12.5M1.5 12H3M4.5 12H8" stroke="#fff" strokeWidth="1.1" />
              <circle cx="11.5" cy="11.5" r="4.5" fill={R} />
              <path d="M11.9 8.5v1.2M11.5 10.7v3.3" stroke="#fff" strokeWidth="1.3" />
            </svg>
          </div>
          <div className="mr-[6px] ml-[8px] flex h-[15px] shrink-0 items-center overflow-hidden bg-[#a0a0a0] pl-[3px]">
            <Swatch /><span className="ml-[6px] flex"><Eye /></span><span className="ml-[5px]">feedline</span>
          </div>
          <div className="mr-[6px] ml-[8px] flex h-[15px] shrink-0 items-center overflow-hidden bg-[#f0f0f0] pl-[3px]">
            <Swatch /><span className="ml-[6px] flex"><Eye /></span><span className="ml-[5px]">gndPlane</span>
          </div>
          <div className="mr-[6px] ml-[8px] flex h-[15px] shrink-0 items-center overflow-hidden bg-[#f0f0f0] pl-[3px]">
            <Swatch /><span className="ml-[6px] flex"><Eye /></span><span className="ml-[5px]">smd</span>
          </div>
          <div className="mx-[3px] mt-[230px] h-1 shrink-0 bg-[#f0f0f0]" />
          <div className="flex h-[21px] shrink-0 items-center justify-between pr-[9px] pl-[8px]">
            <span>Net Classes</span>
            <svg width="14" height="14" viewBox="0 0 14 14">
              <path d="M4 4L12.5 12.5" stroke={B} strokeWidth="2.2" />
              <path d="M3 .3A3.3 3.3 0 1 1 .3 3L2.2 4.4L4.4 4.2L4.6 2.2Z" fill={B} />
            </svg>
          </div>
          <div className="mt-[3px] flex h-[18px] shrink-0 items-center pl-[29px]">
            <Eye /><span className="ml-[3px]">Default</span>
          </div>
          <div className="flex h-[18px] shrink-0 items-center pl-[8px]">
            <Swatch plain /><span className="ml-[7px] flex"><Eye /></span><span className="ml-[3px]">SMD Stuff</span>
          </div>
          <div className="mt-auto mb-[5px] flex h-[18px] shrink-0 items-center pl-[10px]">
            <svg width="5" height="9"><path d="M0 0L5 4.5L0 9Z" fill="#000" /></svg>
            <span className="ml-[2px] tracking-[-0.25px]">Net Display Options</span>
          </div>
        </div>
      </div>
      <div className="h-[49px] shrink-0 border-l border-[#b0b0b0] bg-[#f0f0f0] pl-[6px]">
        <div className="h-[17px] leading-[17px]">Presets (Ctrl+Tab):</div>
        <Combo label="All Layers" className="w-[166px]" />
      </div>
      <div className="mt-1 h-5 shrink-0 bg-[#bababa] pl-[3px] leading-5">Selection Filter</div>
      <div className="flex flex-1 border-l border-[#b0b0b0] bg-[#f0f0f0] pt-[5px] pl-[4px]">
        <div className="w-[92px]">
          <Check label="All items" /><Check label="Footprints" /><Check label="Tracks" />
          <Check label="Pads" /><Check label="Zones" /><Check label="Dimensions" />
        </div>
        <div>
          <Check label="Locked items" /><Check label="Text" /><Check label="Vias" />
          <Check label="Graphics" /><Check label="Rule Areas" /><Check label="Other items" />
        </div>
      </div>
    </div>
  );
}

const Stat = ({ a, b, w }: { a: string; b: string; w: string }) => (
  <div className={"shrink-0 leading-[14px] " + w}>
    <div>{a}</div>
    <div>{b}</div>
  </div>
);
const Cell = ({ t, w }: { t: string; w: string }) => (
  <div className={"h-[21px] shrink-0 border-l border-[#d4d4d4] pl-[4px] leading-[21px] whitespace-pre " + w}>{t}</div>
);

export default function App() {
  return (
    <div className="flex h-[1399px] w-[2567px] overflow-hidden bg-black font-['Open_Sans','Noto_Sans',sans-serif] text-[12px] leading-4 tracking-[-0.35px] text-black">
      <div className="flex h-[1397px] w-[2560px] shrink-0 flex-col bg-[#f0f0f0]">
        <div className="flex h-[20px] shrink-0 items-start bg-white pl-[2px]">
          <svg width="16" height="16" viewBox="0 0 24 24" className="mt-px"><Board /></svg>
          <span className="mt-px ml-[5px] flex-1">PatchArray — PCB Editor</span>
          <svg width="122" height="16" fill="none" stroke="#000" strokeWidth="1">
            <path d="M1 7.5H11" />
            <path d="M46.5 4.5H53.5V11.5H46.5ZM48.5 4.5V2.5H55.5V9.5H53.5" />
            <path d="M92 2L102 12M102 2L92 12" />
          </svg>
        </div>
        <div className="flex h-[18px] shrink-0 bg-white leading-5">
          <span className="ml-[7px] w-[32px]">File</span>
          <span className="w-[34px]">Edit</span>
          <span className="w-[39px]">View</span>
          <span className="w-[42px]">Place</span>
          <span className="w-[45px]">Route</span>
          <span className="w-[52px]">Inspect</span>
          <span className="w-[41px]">Tools</span>
          <span className="w-[75px]">Preferences</span>
          <span>Help</span>
        </div>
        <TopToolbar />
        <div className="flex h-[37px] shrink-0 bg-[#dcdcdc]">
          <div className="flex w-[681px] items-center bg-[#f0f0f0] pl-[5px]">
            <Combo label="Track: use netclass width" className="w-[158px]" />
            <div className="ml-[2px]">
              <Btn on>
                <Ico>
                  <path d="M1.5 0V17Q1.5 22 6.5 22H16.5Q21.5 22 21.5 17V0" strokeWidth="1.7" />
                  <path d="M6.5 8.5H16.5M6.5 13.5H16.5" strokeWidth="1.5" />
                  <circle cx="11.5" cy="21" r="3" fill={B} stroke="none" />
                </Ico>
              </Btn>
            </div>
            <div className="mx-px flex"><VSep /></div>
            <Combo label="Via: use netclass sizes" className="ml-[2px] w-[150px]" />
            <div className="mx-[2px] flex"><VSep /></div>
            <Combo label="Grid: 0.2540 mm (10.00 mils)" className="w-[202px]" />
            <div className="mx-[2px] flex"><VSep /></div>
            <Combo label="Zoom Auto" className="w-[96px]" />
          </div>
        </div>
        <div className="flex h-[1230px] shrink-0">
          <LeftToolbar />
          <div className="flex w-[2302px] shrink-0 flex-col border border-[#a0a0a0]">
            <div className="flex">
              <Canvas />
              <div className="flex w-[17px] flex-col items-center justify-between py-[6px]">
                <svg width="9" height="6" fill="none" stroke={G} strokeWidth="2"><path d="M1 5L4.5 1.5L8 5" /></svg>
                <div className="mt-[38px] h-[29px] w-[15px] bg-[#cdcdcd]" />
                <svg width="9" height="6" fill="none" stroke={G} strokeWidth="2"><path d="M1 1L4.5 4.5L8 1" /></svg>
              </div>
            </div>
            <div className="flex h-[17px] w-[2283px] items-center border-t border-white pr-[5px] pl-[5px]">
              <svg width="6" height="9" fill="none" stroke={G} strokeWidth="2"><path d="M5 1L1.5 4.5L5 8" /></svg>
              <div className="ml-[1099px] h-[15px] w-[186px] bg-[#cdcdcd]" />
              <svg width="6" height="9" fill="none" stroke={G} strokeWidth="2" className="ml-auto"><path d="M1 1L4.5 4.5L1 8" /></svg>
            </div>
          </div>
          <RightToolbar />
          <Dock />
        </div>
        <div className="flex h-[30px] shrink-0 border-t border-[#dcdcdc] pl-[11px]">
          <Stat a="Pads" b="55" w="w-[54px]" />
          <Stat a="Vias" b="5" w="w-[50px]" />
          <Stat a="Track Segments" b="5" w="w-[112px]" />
          <Stat a="Nets" b="2" w="w-[53px]" />
          <Stat a="Unrouted" b="4" w="w-[80px]" />
        </div>
        <div className="flex h-[23px] shrink-0 items-center border-t border-[#d4d4d4]">
          <div className="w-[1489px] shrink-0 pl-[2px] tracking-[-0.24px]">{"File 'C:\\Users\\ajhgo\\Desktop\\PatchArray\\PatchArray.kicad_pcb' saved."}</div>
          <Cell t="Z 3.75" w="w-[78px]" />
          <Cell t="X 30.7340  Y 80.7720" w="w-[160px]" />
          <Cell t="dx 30.7340  dy 80.7720  dist 86.4216" w="w-[251px]" />
          <Cell t="grid X 0.2540  Y 0.2540" w="w-[184px]" />
          <Cell t="mm" w="w-[66px]" />
          <Cell t="Select item(s)" w="w-[173px]" />
          <Cell t="" w="w-[158px]" />
        </div>
      </div>
      <div className="flex w-[7px] shrink-0 flex-col">
        <div className="flex h-[773px] flex-col bg-[#1e2025]">
          <div className="h-[3px] w-1 rounded-br bg-[#eee]" />
          <div className="mt-[649px] h-2 w-1 rounded-r-full bg-[#f0f0f0]" />
          <div className="mt-[104px] h-2 w-1 rounded-r-full bg-[#f0f0f0]" />
        </div>
      </div>
    </div>
  );
}
